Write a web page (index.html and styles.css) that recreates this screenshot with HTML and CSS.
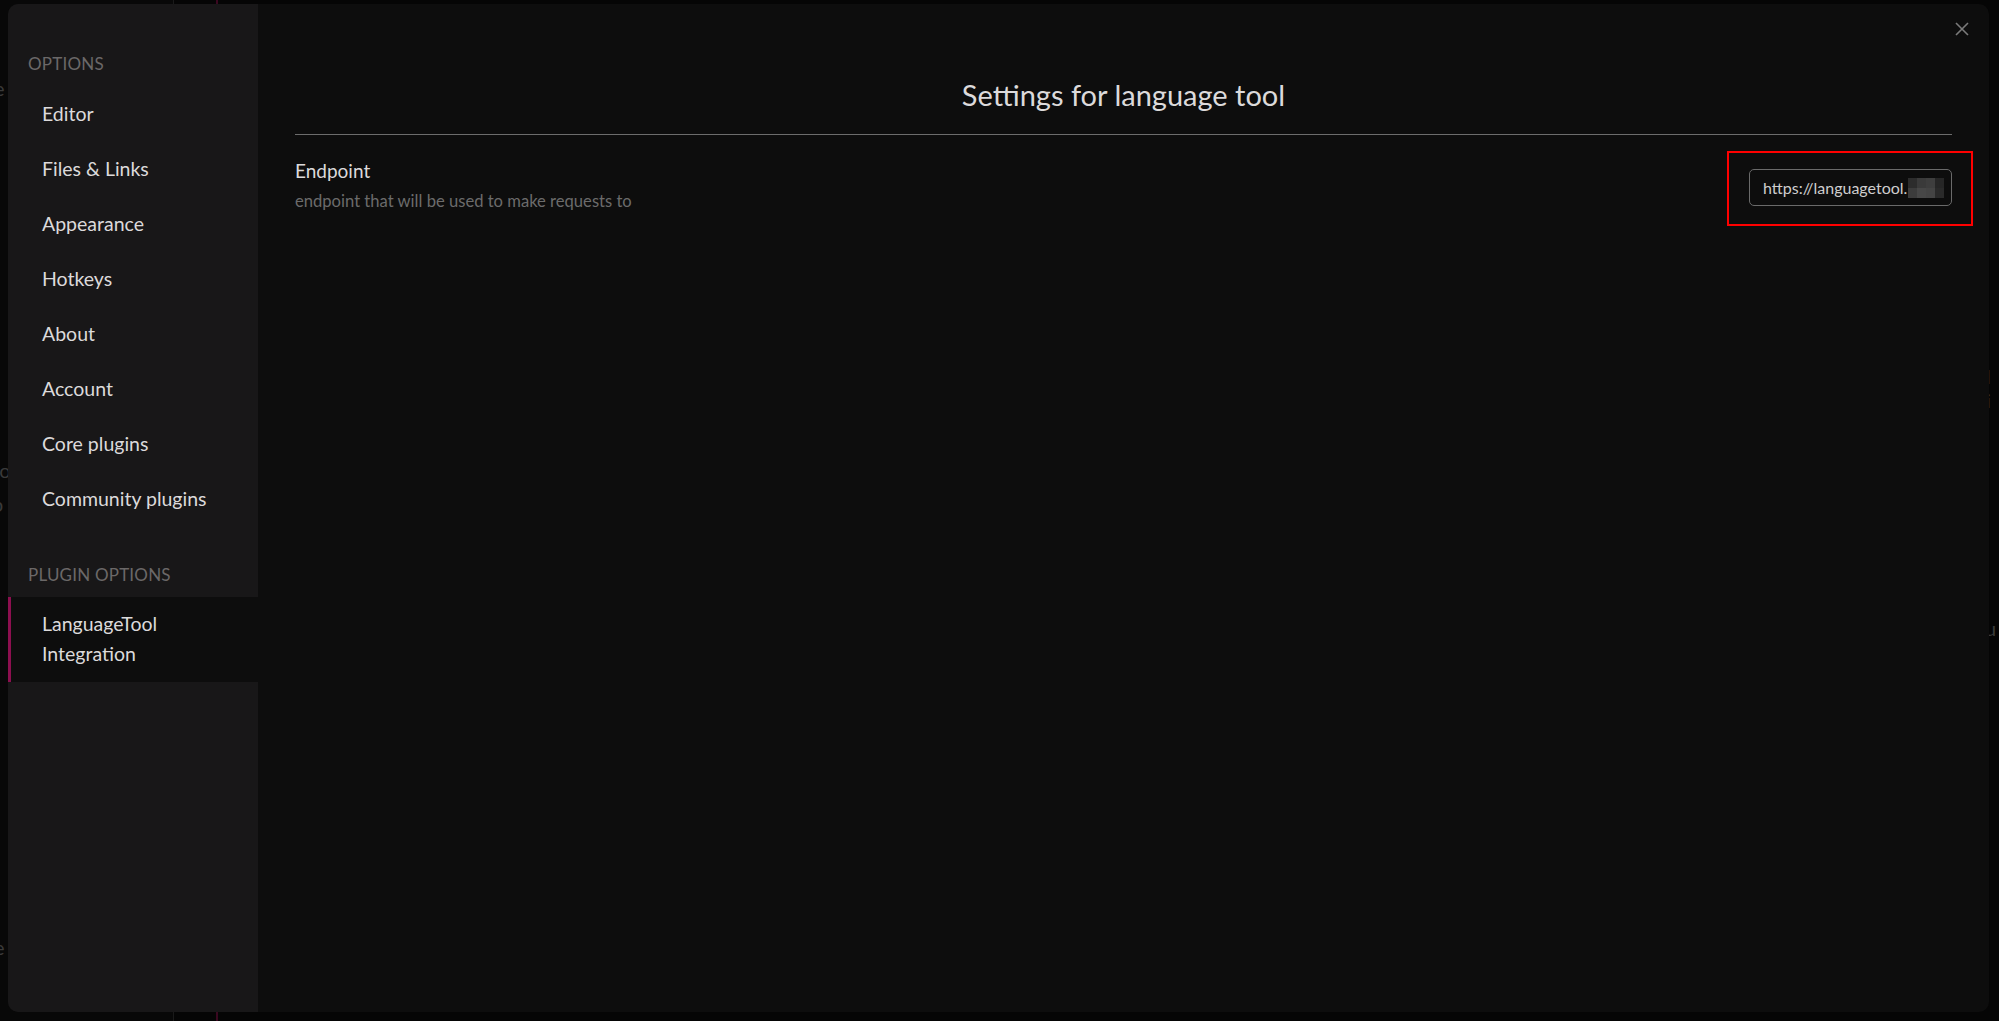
FILE: index.html
```html
<!DOCTYPE html>
<html>
<head>
<meta charset="utf-8">
<link rel="stylesheet" href="styles.css">
</head>
<body>
<div class="backdrop">
  <div class="bg-left"></div>
  <div class="bg-line"></div>
  <div class="bg-accent"></div>
  <span class="ghost g1">e</span>
  <span class="ghost g2">co</span>
  <span class="ghost g3">p</span>
  <span class="ghost g4">e</span>
  <span class="ghost g5">l i</span>
  <span class="ghost g6">u</span>
</div>
<div class="modal">
  <nav class="sidebar">
    <div class="group-title first">Options</div>
    <div class="nav-item">Editor</div>
    <div class="nav-item">Files &amp; Links</div>
    <div class="nav-item">Appearance</div>
    <div class="nav-item">Hotkeys</div>
    <div class="nav-item">About</div>
    <div class="nav-item">Account</div>
    <div class="nav-item">Core plugins</div>
    <div class="nav-item">Community plugins</div>
    <div class="group-title second">Plugin options</div>
    <div class="nav-item active">LanguageTool<br>Integration</div>
  </nav>
  <main class="content">
    <h2 class="title">Settings for language tool</h2>
    <div class="setting">
      <div class="setting-info">
        <div class="setting-name">Endpoint</div>
        <div class="setting-desc">endpoint that will be used to make requests to</div>
      </div>
      <div class="setting-control">
        <div class="input">
          <span class="input-text">https://languagetool.</span>
          <span class="pixels">
            <i class="p1"></i><i class="p2"></i><i class="p3"></i><i class="p4"></i>
            <i class="p5"></i><i class="p6"></i><i class="p7"></i><i class="p8"></i>
          </span>
        </div>
      </div>
    </div>
  </main>
  <div class="close" aria-label="Close">
    <svg width="14" height="14" viewBox="0 0 14 14"><path d="M1 1 L13 13 M13 1 L1 13" stroke="#7a7a7a" stroke-width="1.6" fill="none"/></svg>
  </div>
</div>
</body>
</html>
```
FILE: styles.css
```css
* { box-sizing: border-box; }
html, body {
  margin: 0;
  padding: 0;
  width: 1999px;
  height: 1021px;
  overflow: hidden;
  background: #050505;
  font-family: "Lato", "Open Sans", sans-serif;
}
body { position: relative; }

.backdrop { position: absolute; inset: 0; }
.bg-left { position: absolute; left: 0; top: 0; width: 173px; height: 1021px; background: #080808; }
.bg-line { position: absolute; left: 173px; top: 0; width: 1px; height: 1021px; background: #1a1a1a; }
.bg-accent { position: absolute; left: 216px; top: 0; width: 2px; height: 1021px; background: #3a0820; }
.ghost { position: absolute; color: #3a3a3a; font-size: 20px; line-height: 24px; }
.g1 { left: -6px; top: 76px; }
.g2 { left: -10px; top: 458px; }
.g3 { left: -8px; top: 492px; }
.g4 { left: -6px; top: 935px; }
.g5 { left: 1986px; top: 364px; }
.g6 { left: 1985px; top: 616px; }

.modal {
  position: absolute;
  left: 8px;
  top: 4px;
  width: 1981px;
  height: 1008px;
  border-radius: 10px;
  overflow: hidden;
  display: flex;
  background: #0d0d0d;
}

.sidebar {
  width: 250px;
  flex: none;
  background: #181718;
  display: flex;
  flex-direction: column;
}
.group-title {
  text-transform: uppercase;
  color: #6b6868;
  font-size: 17px;
  line-height: 24px;
  padding-left: 20px;
  letter-spacing: 0.2px;
}
.group-title.first { margin-top: 48px; margin-bottom: 11px; }
.group-title.second { margin-top: 36px; margin-bottom: 10px; }
.nav-item {
  color: #dcdadb;
  font-size: 19.5px;
  line-height: 30px;
  padding: 12px 10px 13px 34px;
}
.nav-item.active {
  background: #0d0d0d;
  box-shadow: inset 3px 0 0 #8c0f4f;
}

.content {
  flex: 1;
  padding: 0 37px;
  display: flex;
  flex-direction: column;
}
.title {
  margin: 0;
  padding-top: 74px;
  padding-bottom: 22px;
  text-align: center;
  font-weight: 400;
  font-size: 29px;
  line-height: 34px;
  color: #dcdadb;
  border-bottom: 1px solid #6c6c6c;
}
.setting {
  display: flex;
  justify-content: space-between;
  align-items: flex-start;
  padding-top: 23px;
}
.setting-name {
  color: #dcdadb;
  font-size: 19px;
  line-height: 26px;
}
.setting-desc {
  color: #6b6b6b;
  font-size: 16.6px;
  line-height: 26px;
  margin-top: 4px;
}
.setting-control {
  outline: 2px solid #ff0000;
  outline-offset: 0;
  padding: 16px 19px 18px 20px;
  margin-right: -19px;
  margin-top: -5px;
}
.input {
  width: 203px;
  height: 37px;
  border: 1px solid #6a6a6a;
  border-radius: 5px;
  display: flex;
  align-items: center;
  padding-left: 13px;
  background: #0d0d0d;
}
.input-text {
  color: #cfcdce;
  font-size: 16px;
}
.pixels {
  display: grid;
  grid-template-columns: repeat(4, 9px);
  grid-template-rows: repeat(2, 10px);
  margin-left: 1px;
}
.pixels i { display: block; }
.p1 { background: #2c2c2c; }
.p2 { background: #3a3a3a; }
.p3 { background: #3e3e3e; }
.p4 { background: #262626; }
.p5 { background: #3c3c3c; }
.p6 { background: #474747; }
.p7 { background: #444444; }
.p8 { background: #2a2a2a; }

.close {
  position: absolute;
  right: 20px;
  top: 18px;
  width: 14px;
  height: 14px;
  display: flex;
}
```
